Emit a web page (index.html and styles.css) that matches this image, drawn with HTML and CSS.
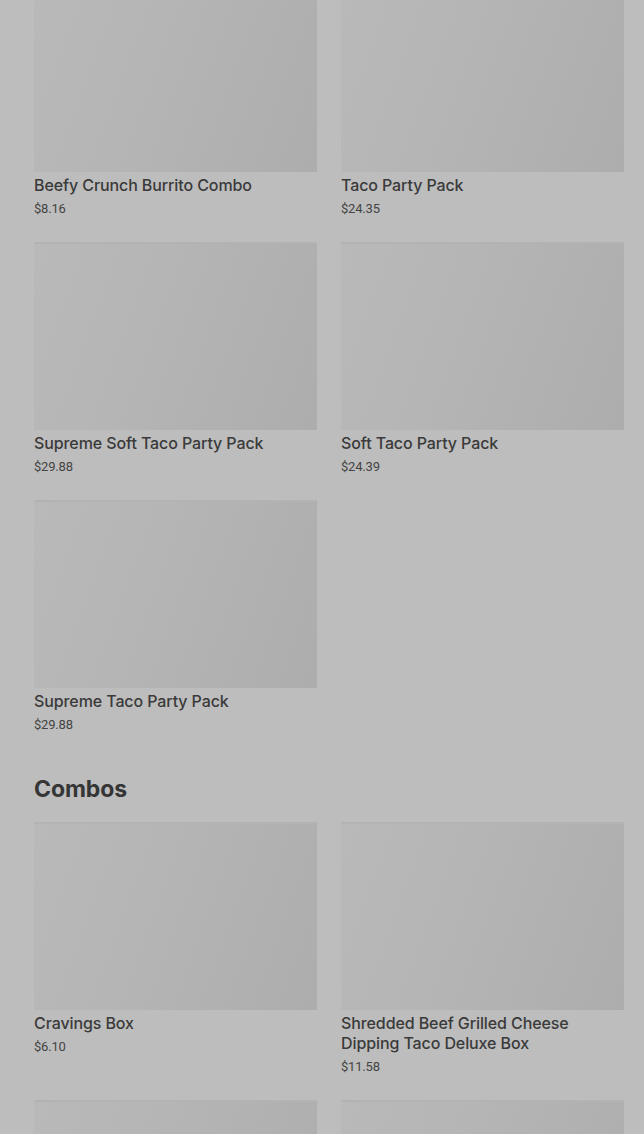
FILE: index.html
```html
<!DOCTYPE html>
<html lang="en">
    <head>
        <meta charset="UTF-8" />
        <meta name="viewport" content="width=device-width, initial-scale=1.0" />
        <title>Menu</title>

        <link rel="stylesheet" href="styles.css">
    </head>
    <body>
        <div class="container">
            <section class="menu-section first">
                <div class="menu-grid">
                    <div class="item">
                        <div class="thumb"></div>
                        <p class="item-name">Beefy Crunch Burrito Combo</p>
                        <p class="item-price">$8.16</p>
                    </div>
                    <div class="item">
                        <div class="thumb"></div>
                        <p class="item-name">Taco Party Pack</p>
                        <p class="item-price">$24.35</p>
                    </div>
                    <div class="item">
                        <div class="thumb"></div>
                        <p class="item-name">Supreme Soft Taco Party Pack</p>
                        <p class="item-price">$29.88</p>
                    </div>
                    <div class="item">
                        <div class="thumb"></div>
                        <p class="item-name">Soft Taco Party Pack</p>
                        <p class="item-price">$24.39</p>
                    </div>
                    <div class="item">
                        <div class="thumb"></div>
                        <p class="item-name">Supreme Taco Party Pack</p>
                        <p class="item-price">$29.88</p>
                    </div>
                </div>
            </section>

            <section class="menu-section">
                <h2>Combos</h2>
                <div class="menu-grid">
                    <div class="item">
                        <div class="thumb"></div>
                        <p class="item-name">Cravings Box</p>
                        <p class="item-price">$6.10</p>
                    </div>
                    <div class="item">
                        <div class="thumb"></div>
                        <p class="item-name">Shredded Beef Grilled Cheese Dipping Taco Deluxe Box</p>
                        <p class="item-price">$11.58</p>
                    </div>
                    <div class="item">
                        <div class="thumb"></div>
                        <p class="item-name">&nbsp;</p>
                        <p class="item-price">&nbsp;</p>
                    </div>
                    <div class="item">
                        <div class="thumb"></div>
                        <p class="item-name">&nbsp;</p>
                        <p class="item-price">&nbsp;</p>
                    </div>
                </div>
            </section>
        </div>
    </body>
</html>
```

FILE: styles.css
```css
* {
    box-sizing: border-box;
}
body {
    margin: 0;
    background: #bdbdbd;
    font-family: Inter, Roboto, "Liberation Sans", sans-serif;
    color: #383838;
    overflow: hidden;
}
.container {
    padding: 0 20px 0 34px;
}
.menu-section.first {
    margin-top: -16px;
}
.menu-section h2 {
    margin: 36px 0 15px;
    font-size: 23px;
    line-height: 36px;
    font-weight: 700;
    color: #353535;
    letter-spacing: -0.1px;
}
.menu-grid {
    display: grid;
    grid-template-columns: 1fr 1fr;
    column-gap: 24px;
    row-gap: 23px;
}
.thumb {
    height: 188px;
    background: linear-gradient(110deg, #b9b9b9 0%, #b5b5b5 40%, #adadad 100%);
    box-shadow: inset 0 2px 0 #b3b3b3;
}
.item-name {
    margin: 3px 0 0;
    font-size: 16px;
    line-height: 20px;
    font-weight: 500;
    color: #3a3a3a;
    letter-spacing: -0.1px;
}
.item-price {
    margin: 4px 0 0;
    font-family: Roboto, "Liberation Sans", sans-serif;
    font-size: 13px;
    line-height: 20px;
    color: #444;
    letter-spacing: -0.2px;
}
```
